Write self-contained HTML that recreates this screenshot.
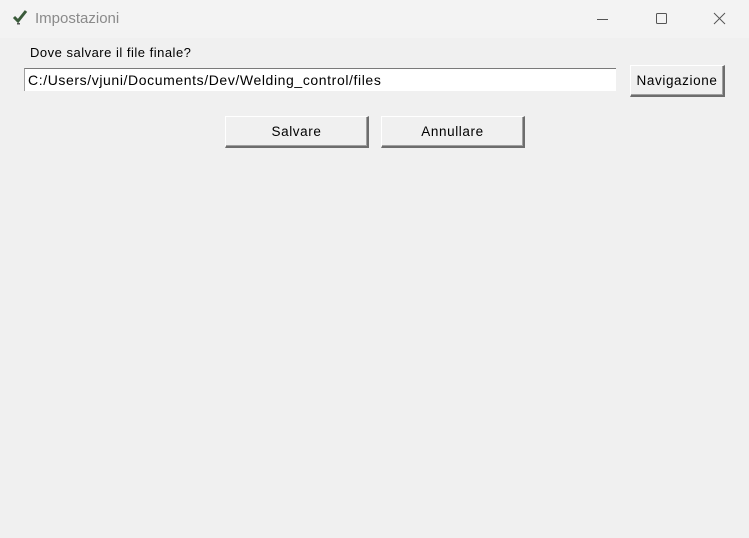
<!DOCTYPE html>
<html><head><style>
body{margin:0;width:749px;height:538px;background:#f0f0f0;font-family:"Liberation Sans",sans-serif;position:relative;overflow:hidden;color:#000}
.tb{position:absolute;left:0;top:0;width:749px;height:38px;background:#f3f3f3}
.t{position:absolute;left:35px;top:10px;font-size:15px;color:#8a8a8a}
.a{position:absolute;font-size:13px;letter-spacing:0.5px}
.entry{position:absolute;left:24px;top:68px;width:592px;height:23px;background:#fff;border-top:1px solid #7a7a7a;border-left:1px solid #a0a0a0;box-sizing:border-box;font-size:14px;letter-spacing:0.6px;padding:3px 0 0 3px;white-space:nowrap}
.btn{position:absolute;box-sizing:border-box;background:#f0f0f0;border:1px solid #fff;border-right:2px solid #6d6d6d;border-bottom:2px solid #6d6d6d;box-shadow:inset -1px -1px 0 #a0a0a0;font-size:13.5px;letter-spacing:0.6px;text-align:center}
</style></head><body>
<div class="tb"></div>
<svg style="position:absolute;left:12px;top:9px" width="16" height="16" viewBox="0 0 16 16"><path d="M2 8 L6 12 L14 2" stroke="#3a5a3a" stroke-width="3" fill="none"/><rect x="5" y="14" width="3" height="1.5" fill="#555"/></svg>
<div class="t">Impostazioni</div>
<svg style="position:absolute;left:595px;top:12px" width="140" height="16"><line x1="2" y1="7.5" x2="13" y2="7.5" stroke="#555"/><rect x="61.5" y="1.5" width="10" height="10" rx="1" stroke="#555" fill="none"/><path d="M119 1 L130 12 M130 1 L119 12" stroke="#555"/></svg>
<div class="a" style="left:30px;top:45px">Dove salvare il file finale?</div>
<div class="entry">C:/Users/vjuni/Documents/Dev/Welding_control/files</div>
<div class="btn" style="left:630px;top:65px;width:95px;height:32px;line-height:29px">Navigazione</div>
<div class="btn" style="left:225px;top:116px;width:144px;height:32px;line-height:29px">Salvare</div>
<div class="btn" style="left:381px;top:116px;width:144px;height:32px;line-height:29px">Annullare</div>
</body></html>
